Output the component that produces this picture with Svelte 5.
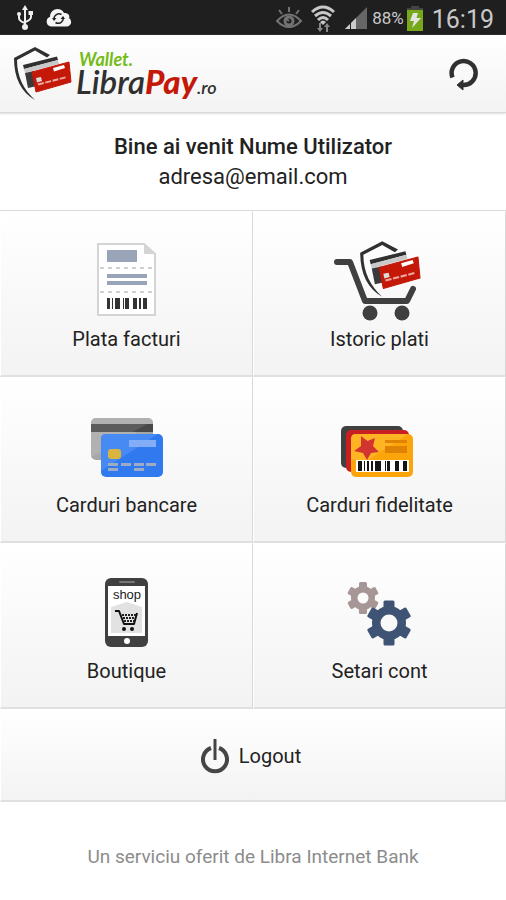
<script>
    const user = { name: "Nume Utilizator", email: "adresa@email.com" };
    const menu = [
        { id: "bills", label: "Plata facturi" },
        { id: "history", label: "Istoric plati" },
        { id: "cards", label: "Carduri bancare" },
        { id: "loyalty", label: "Carduri fidelitate" },
        { id: "shop", label: "Boutique" },
        { id: "settings", label: "Setari cont" }
    ];
    const teeth = [0, 60, 120, 180, 240, 300];
    // [x, width]
    const billBars = [[31, 3], [36, 1], [39, 5], [47, 1], [49, 4], [57, 4], [63, 2], [67, 4]];
    const loyaltyBars = [[29, 4], [35, 1], [38, 2], [42, 2], [46, 6], [56, 1], [58, 2], [60, 1], [66, 4], [74, 4]];
</script>

{#snippet shield()}
    <path fill="#303030" d="M40 12 L25 4 L4 15 C4 35 11 49 25 57 C14 47 7 34 7 17 L25 7.5 L37 14.5Z" />
    <path fill="#303030" d="M13 22 L47 13.5 L48 17 L14 26Z" />
    <path fill="#c9c9c9" d="M14 26 L48 17 L49 21 L15 30Z" />
    <path fill="#3a3a3a" d="M15 30 L24 28 L27 43 L18 45Z" />
    <path fill="#c41808" stroke="#c41808" stroke-width="1" stroke-linejoin="round" d="M22 29 L59 19 L61 39 L26 49Z" />
    <path fill="#fff" d="M43 25 L54 22 L55 25 L44 28.5Z" />
    <path fill="#ddd" d="M26 35 L31 34 L32 38 L27 39.5Z" />
    <path fill="none" stroke="#eba8a0" stroke-width="2" stroke-dasharray="6 1.5" d="M28 41.5 L57 34" />
{/snippet}

{#snippet gear(cx, cy, body, hole, outer, width, color)}
    <g transform="translate({cx} {cy})">
        <circle r={(body + hole) / 2} fill="none" stroke={color} stroke-width={body - hole} />
        {#each teeth as angle}
            <rect x={-width / 2} y={-outer} {width} height={outer - body + 4} rx="1.5" fill={color} transform="rotate({angle})" />
        {/each}
    </g>
{/snippet}

<div class="statusBar">
    <div class="statusGroup left">
        <svg width="18" height="28" viewBox="0 0 18 28" fill="none" stroke="#eee" stroke-width="2">
            <path d="M9 4V23M3 10V14Q3 17 9 19M15 10V13Q15 16 9 18" />
            <path fill="#eee" stroke="none" d="M9 1L12 6H6ZM12.5 7H17V11H12.5Z" />
            <circle cx="9" cy="23" r="3" fill="#eee" stroke="none" />
            <circle cx="3" cy="10" r="2" fill="#eee" stroke="none" />
        </svg>
        <svg width="26" height="20" viewBox="0 0 26 20">
            <path fill="#f4f4f4" d="M6 18.5C-1 18.5 -.5 9.5 4 9C4 0 15 -1.5 18 5C23 5 24 8 23 10C27 13 25 18.5 20 18.5Z" />
            <path fill="none" stroke="#222" stroke-width="1.5" d="M8 11A5 5 0 0 1 15.5 6.5M17 9A5 5 0 0 1 9.5 14.5" />
            <path fill="#222" d="M6 10H10.5L8 13ZM14.5 11H19L17 8Z" />
        </svg>
    </div>
    <div class="statusGroup">
        <svg width="26" height="24" viewBox="0 0 26 24" fill="none" stroke="#727272" stroke-width="2">
            <path d="M1 15Q13 2 25 15Q13 27 1 15Z" />
            <path d="M13 1V6M3 4L6 8M23 4L20 8" />
            <circle cx="13" cy="15" r="4" stroke-width="3" />
            <path d="M9 12L13 15" />
        </svg>
        <svg width="26" height="28" viewBox="0 0 26 28" fill="none" stroke="#c8c8c8" stroke-width="3">
            <path d="M2 8Q13 -2 24 8M5 12Q13 5 21 12M8 16Q13 11 18 16" />
            <path fill="#c8c8c8" stroke="none" d="M10 18Q13 15 16 18L13 21Z" />
            <path fill="#888" stroke="none" d="M9 19H11V24H13L10 28L7 24H9ZM16 28V23H14L17 19L20 23H18V28Z" />
        </svg>
        <svg width="24" height="24" viewBox="0 0 24 24">
            <path fill="#666" d="M23 1V23H1Z" />
            <path fill="#ccc" d="M12 12V23H1Z" />
            <path stroke="#1f1f1f" d="M6.5 16V23" />
        </svg>
        <span class="percent">88%</span>
        <svg width="18" height="26" viewBox="0 0 18 26">
            <path fill="#444" d="M5 1H13V3H17V5H1V3H5Z" />
            <path fill="#76a81a" d="M1 5H17V26H1Z" />
            <path fill="#e4e4e4" d="M7 8H12L10.5 13H15L6 23L8 16H4Z" />
        </svg>
        <span class="clock">16:19</span>
    </div>
</div>

<header>
    <a class="logo" href="#home" aria-label="Wallet LibraPay.ro">
        <svg width="64" height="60" viewBox="0 1 64 60">{@render shield()}</svg>
        <span class="brand">
            <span class="wallet">Wallet.</span>
            <span class="name">Libra<b>Pay</b><small>.ro</small></span>
        </span>
    </a>
    <button class="refresh" aria-label="Refresh">
        <svg width="32" height="34" viewBox="0 0 32 34">
            <path fill="none" stroke="#303030" stroke-width="4.5" d="M4.5 20.5A12 12 0 1 1 15 28" />
            <path fill="#303030" stroke="#303030" stroke-linejoin="round" d="M9 28L15 23V33Z" />
        </svg>
    </button>
</header>

<main>
    <div class="welcome">
        <h1>Bine ai venit {user.name}</h1>
        <p>{user.email}</p>
    </div>

    <nav class="menu">
        {#each menu as item}
        <button class="tile">
            <svg width="100" height="84" viewBox="1 0 100 84">
                {#if item.id === "bills"}
                    <path fill="#fff" stroke="#d4d4d4" stroke-width="2" d="M22 5H68L79 15V76H22Z" />
                    <path fill="#d4d4d4" d="M68 4L80 15H68Z" />
                    <path fill="#9aa4b8" d="M31 11H61V23H31ZM31 35H71V39H31ZM31 42H71V46H31Z" />
                    <path stroke="#d0d0d0" stroke-width="2" stroke-dasharray="4 4" d="M24 29H78M24 53H78" />
                    {#each billBars as [x, width]}
                        <rect {x} y="59" {width} height="11" fill="#333" />
                    {/each}
                {:else if item.id === "history"}
                    <g transform="translate(27 -2) scale(1.05)">{@render shield()}</g>
                    <path fill="none" stroke="#404040" stroke-width="6" stroke-linecap="round" stroke-linejoin="round" d="M8 23H21L36 62H78L84 50" />
                    <circle cx="41" cy="74" r="7.5" fill="#404040" />
                    <circle cx="73" cy="74" r="7.5" fill="#404040" />
                {:else if item.id === "cards"}
                    <rect x="15" y="13" width="62" height="42" rx="5" fill="#a6a6a6" />
                    <path fill="#bbb" d="M20 13H72Q77 13 77 18L40 40L15 52V18Q15 13 20 13Z" opacity=".5" />
                    <path fill="#484848" d="M15 19H77V27H15Z" />
                    <path fill="#5c5c5c" d="M15 19H71L57 27H15Z" />
                    <rect x="25" y="29" width="62" height="43" rx="5" fill="#3179ef" />
                    <path fill="#488af3" d="M30 29H82L25 66V34Q25 29 30 29Z" />
                    <rect x="53" y="35" width="27" height="7" fill="#83adf6" />
                    <rect x="32" y="44" width="13" height="10" rx="3" fill="#d9b43f" />
                    <path fill="#9eabc4" d="M32 58H42V61H32ZM45 58H55V61H45ZM58 58H68V61H58ZM70 58H80V61H70ZM32 63H42V66H32ZM58 63H68V66H58Z" />
                {:else if item.id === "loyalty"}
                    <rect x="12" y="21" width="62" height="42" rx="5" fill="#404040" />
                    <rect x="17" y="25" width="63" height="42" rx="5" fill="#c91f22" />
                    <rect x="22" y="29" width="62" height="43" rx="5" fill="#fba50a" />
                    <path fill="#ffb424" d="M27 29H79L39 55H22V34Q22 29 27 29Z" />
                    <path fill="#d23430" d="M32 31L38.5 36L46 33L44 41L50 47L42 48L38 55L34 48L25 46L32 41Z" />
                    <path fill="#e08304" d="M56 35H78V38H56ZM56 41H78V48H56Z" />
                    <rect x="27" y="55" width="53" height="12" fill="#fff" />
                    {#each loyaltyBars as [x, width]}
                        <rect {x} y="56" {width} height="10" fill="#151515" />
                    {/each}
                {:else if item.id === "shop"}
                    <rect x="29" y="7" width="43" height="69" rx="6" fill="#404040" />
                    <rect x="43" y="10" width="16" height="2" rx="1" fill="#777" />
                    <rect x="32" y="15" width="37" height="50" fill="#fff" />
                    <path fill="#e2e2e2" d="M35 36L51 31L66 36V62H35Z" />
                    <text class="shopText" x="51" y="28" text-anchor="middle">shop</text>
                    <path fill="none" stroke="#111" stroke-width="2" stroke-linejoin="round" d="M39 40H43L48 53H58L61 42" />
                    <path fill="none" stroke="#222" stroke-width="2" stroke-dasharray="2 1" d="M46 44H60M47 47H59M48 50H58" />
                    <circle cx="48" cy="58" r="2" fill="#111" />
                    <circle cx="56" cy="58" r="2" fill="#111" />
                    <circle cx="51" cy="70" r="3" fill="#fff" />
                {:else}
                    {@render gear(34, 27, 12, 5.5, 16, 8, "#a69695")}
                    {@render gear(60, 52, 17, 8.5, 22.5, 11, "#3f5374")}
                {/if}
            </svg>
            <span>{item.label}</span>
        </button>
        {/each}
        <button class="tile logout">
            <svg width="28" height="36" viewBox="0 0 28 36">
                <path fill="none" stroke="#454545" stroke-width="4" d="M10 10A12 12 0 1 0 18 10" />
                <path stroke="#454545" stroke-width="3" d="M14 1V22" />
            </svg>
            <span>Logout</span>
        </button>
    </nav>
</main>

<footer>Un serviciu oferit de Libra Internet Bank</footer>

<style>
    :global(body) {
        background: #fff;
        font-family: Roboto, "Liberation Sans", sans-serif;
        color: #222;
    }
    svg {
        display: block;
        flex: none;
    }
    button {
        border: 0;
        font: inherit;
        color: inherit;
        cursor: pointer;
    }
    .statusBar {
        display: flex;
        justify-content: space-between;
        align-items: center;
        height: 35px;
        padding: 0 12px 0 16px;
        background: #1f1f1f;
        color: #c8c8c8;
    }
    .statusGroup {
        display: flex;
        align-items: center;
        gap: 8px;
    }
    .left {
        gap: 12px;
    }
    .percent {
        margin: 0 -6px 0 -4px;
        font-size: 17px;
    }
    .clock {
        font-size: 25px;
        line-height: 32px;
        padding-top: 4px;
    }
    header {
        display: flex;
        justify-content: space-between;
        align-items: center;
        box-sizing: border-box;
        height: 78px;
        padding: 0 20px 0 10px;
        background: linear-gradient(#fff, #f3f3f3);
        border-bottom: 1px solid #d8d8d8;
        box-shadow: 0 1px 2px #ddd;
    }
    .logo {
        display: flex;
        align-items: center;
        gap: 2px;
        text-decoration: none;
    }
    .brand {
        display: flex;
        flex-flow: column;
        font-family: Lato, "Open Sans", sans-serif;
        font-style: italic;
    }
    .wallet {
        padding-left: 3px;
        font-size: 18px;
        font-weight: 700;
        line-height: 20px;
        color: #74bc16;
    }
    .name {
        font-size: 33px;
        font-weight: 600;
        line-height: 24px;
        color: #303030;
    }
    .name b {
        font-weight: 900;
        color: #c41808;
    }
    .name small {
        font-size: 18px;
    }
    .refresh {
        padding: 6px;
        background: none;
    }
    .welcome {
        padding: 19px 12px 18px;
        text-align: center;
        font-size: 22px;
        line-height: 30px;
    }
    h1, p {
        margin: 0;
        font-size: 22px;
    }
    h1 {
        font-weight: 500;
    }
    .menu {
        display: grid;
        grid-template-columns: 1fr 1fr;
        border-top: 1px solid #dadada;
    }
    .tile {
        display: flex;
        flex-flow: column;
        align-items: center;
        gap: 4px;
        padding: 27px 0 24px;
        background: linear-gradient(#fff, #f3f3f3);
        border: 1px solid #fff;
        border-right-color: #d8d8d8;
        border-bottom: 2px solid #e0e0e0;
        font-size: 20px;
        line-height: 24px;
    }
    .logout {
        grid-column: 1 / -1;
        flex-flow: row;
        justify-content: center;
        gap: 10px;
        padding: 28px 4px 26px 0;
    }
    .shopText {
        font-family: "Liberation Sans", Arial, sans-serif;
        font-size: 13px;
        fill: #222;
    }
    footer {
        padding: 43px 12px 30px;
        text-align: center;
        font-size: 19px;
        line-height: 24px;
        color: #8c8c8c;
    }
</style>
